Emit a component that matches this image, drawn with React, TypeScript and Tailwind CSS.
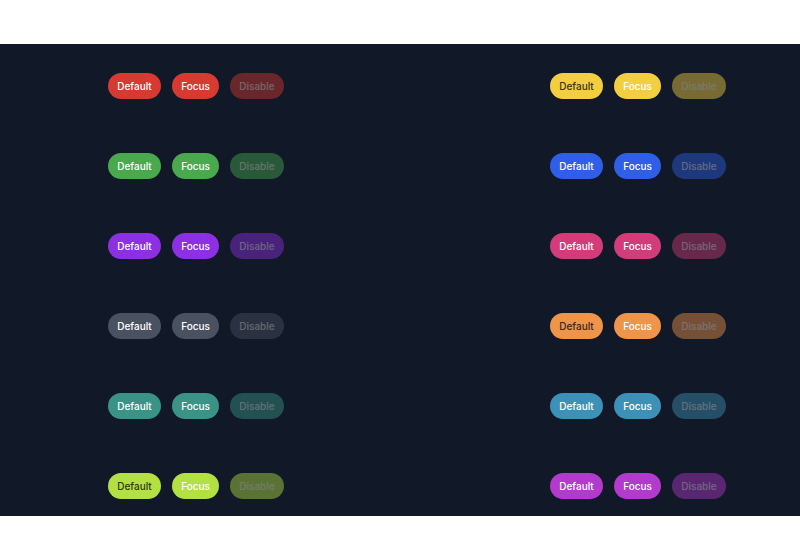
import React from "react";

type Variant = {
  name: string;
  bg: string;
  text: string;
  focusText: string;
};

// each row: a colour with its three states
const left: Variant[] = [
  { name: "red", bg: "bg-[#d63a30]", text: "text-white", focusText: "text-white" },
  { name: "green", bg: "bg-[#48a94d]", text: "text-white", focusText: "text-white" },
  { name: "purple", bg: "bg-[#8d2fe3]", text: "text-white", focusText: "text-white" },
  { name: "gray", bg: "bg-[#4a5262]", text: "text-white", focusText: "text-white" },
  { name: "teal", bg: "bg-[#3a9485]", text: "text-white", focusText: "text-white" },
  { name: "lime", bg: "bg-[#b3e043]", text: "text-[#2f3a12]", focusText: "text-white" },
];

const right: Variant[] = [
  { name: "yellow", bg: "bg-[#f3cf40]", text: "text-[#3a3412]", focusText: "text-white" },
  { name: "blue", bg: "bg-[#2f5fe6]", text: "text-white", focusText: "text-white" },
  { name: "pink", bg: "bg-[#d23c78]", text: "text-white", focusText: "text-white" },
  { name: "orange", bg: "bg-[#ef954a]", text: "text-[#3f2612]", focusText: "text-white" },
  { name: "cyan", bg: "bg-[#3b92b6]", text: "text-white", focusText: "text-white" },
  { name: "magenta", bg: "bg-[#b23acd]", text: "text-white", focusText: "text-white" },
];

const Pill = ({
  label,
  className,
  disabled,
}: {
  label: string;
  className: string;
  disabled?: boolean;
}) => (
  <button
    disabled={disabled}
    className={`h-[26px] rounded-full px-[9px] text-[10px] font-medium leading-none ${className} ${
      disabled ? "opacity-45" : ""
    }`}
  >
    {label}
  </button>
);

const Group = ({ v }: { v: Variant }) => (
  <div className="flex items-center gap-[11px]">
    <Pill label="Default" className={`${v.bg} ${v.text} min-w-[53px]`} />
    <Pill label="Focus" className={`${v.bg} ${v.focusText} min-w-[47px]`} />
    <Pill label="Disable" className={`${v.bg} text-white/70 min-w-[54px]`} disabled />
  </div>
);

export default function App() {
  return (
    <div
      className="h-[560px] w-[800px] bg-white pt-[44px]"
      style={{ fontFamily: "Inter, 'Noto Sans', sans-serif" }}
    >
      <div className="h-[472px] bg-[#111827] pl-[108px] pt-[29px]">
        <div className="grid grid-cols-[442px_auto] gap-y-[54px]">
          {left.map((v, i) => (
            <React.Fragment key={v.name}>
              <Group v={v} />
              <Group v={right[i]} />
            </React.Fragment>
          ))}
        </div>
      </div>
    </div>
  );
}
